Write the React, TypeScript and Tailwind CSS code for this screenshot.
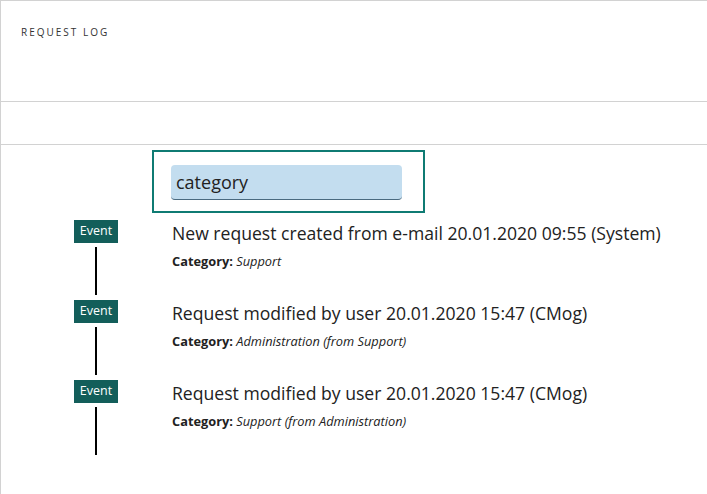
const events = [
  {
    title: 'New request created from e-mail 20.01.2020 09:55 (System)',
    value: 'Support',
  },
  {
    title: 'Request modified by user 20.01.2020 15:47 (CMog)',
    value: 'Administration (from Support)',
  },
  {
    title: 'Request modified by user 20.01.2020 15:47 (CMog)',
    value: 'Support (from Administration)',
  },
];

export default function App() {
  return (
    <div
      className="h-[494px] w-[707px] overflow-hidden border-l border-t border-[#d2d2d2] bg-white text-[#222]"
      style={{ fontFamily: '"Open Sans", "Noto Sans", sans-serif' }}
    >
      {/* Header */}
      <div className="h-[101px] border-b border-[#d2d2d2] pl-[20px] pt-[24px]">
        <h1 className="text-[10px] leading-[14px] tracking-[0.2em] text-[#333]">REQUEST LOG</h1>
      </div>
      <div className="h-[43px] border-b border-[#d2d2d2]" />

      {/* Search */}
      <div className="ml-[151px] mt-[5px] h-[63px] w-[273px] border-2 border-[#0f7b73] pl-[17px] pt-[13px]">
        <input
          defaultValue="category"
          className="h-[35px] w-[231px] rounded-[4px] border-b border-[#4a6a80] bg-[#c3ddef] pl-[5px] text-[18px] text-[#222] outline-none"
        />
      </div>

      {/* Timeline */}
      <div className="mt-[7px] flex flex-col">
        {events.map((ev, i) => (
          <div key={i} className="flex h-[80px]">
            <div className="flex w-[171px] flex-col items-start pl-[73px]">
              <span className="flex h-[23px] w-[44px] items-center justify-center bg-[#135e5a] text-[12.5px] text-white">
                Event
              </span>
              <span className="ml-[21px] mt-[4px] h-[48px] w-[2px] bg-black" />
            </div>
            <div>
              <div className="text-[17.6px] leading-[26px] text-[#222]">{ev.title}</div>
              <div className="mt-[7px] text-[12.8px] leading-[16px] text-[#222]">
                <span className="font-bold">Category:</span> <em>{ev.value}</em>
              </div>
            </div>
          </div>
        ))}
      </div>
    </div>
  );
}
